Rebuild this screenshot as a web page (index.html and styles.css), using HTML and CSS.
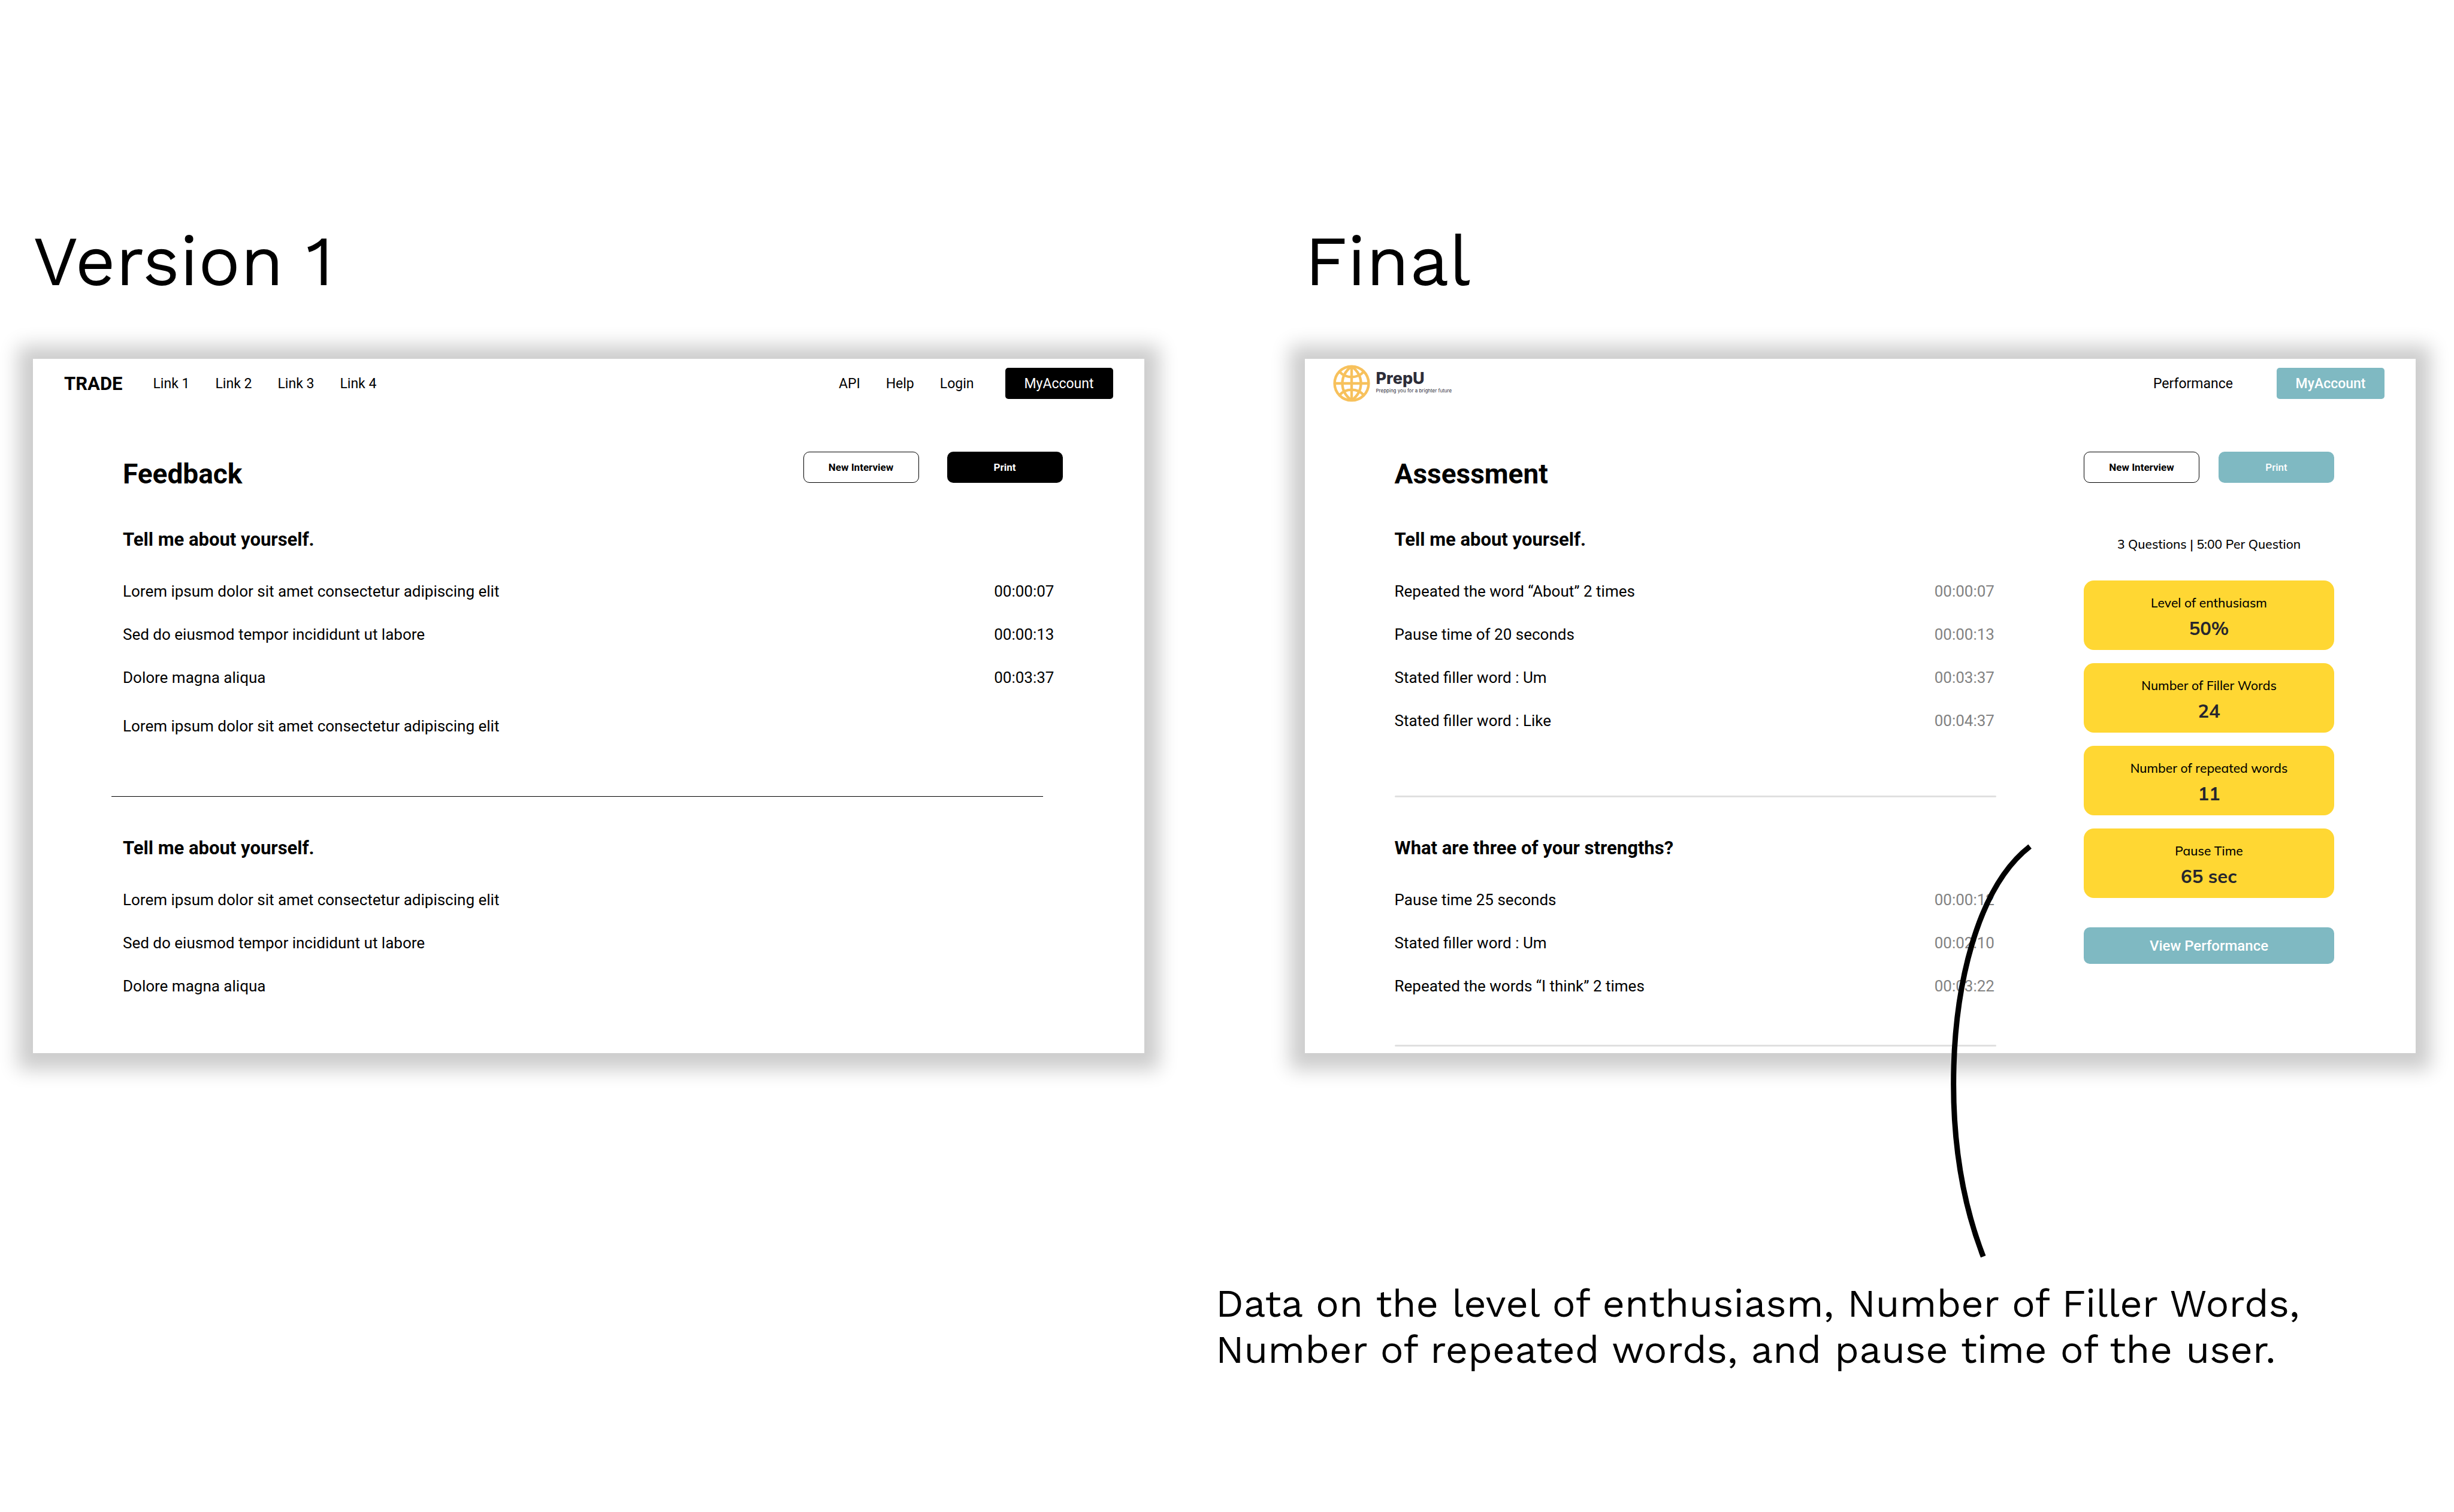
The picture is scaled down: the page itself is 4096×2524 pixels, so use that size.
FILE: index.html
```html
<!DOCTYPE html>
<html lang="en">
<head>
<meta charset="utf-8">
<title>PrepU: Version 1 and Final</title>
<link rel="stylesheet" href="styles.css">
</head>
<body>
<main class="page">
  <div class="versions">
    <section class="version">
      <h1 class="version-title">Version 1</h1>
      <div class="frame">
        <div class="screen">
          <header class="navbar">
            <a class="brand" href="#">TRADE</a>
            <nav class="links">
              <a href="#">Link 1</a>
              <a href="#">Link 2</a>
              <a href="#">Link 3</a>
              <a href="#">Link 4</a>
            </nav>
            <nav class="links links-end">
              <a href="#">API</a>
              <a href="#">Help</a>
              <a href="#">Login</a>
            </nav>
            <button class="account account-dark" type="button">MyAccount</button>
          </header>
          <div class="content">
            <div class="title-row">
              <h2 class="screen-title">Feedback</h2>
              <div class="actions actions-wide">
                <button class="action action-outline" type="button">New Interview</button>
                <button class="action action-dark" type="button">Print</button>
              </div>
            </div>
            <h3 class="question">Tell me about yourself.</h3>
            <table class="remarks remarks-inset">
              <tr><td>Lorem ipsum dolor sit amet consectetur adipiscing elit</td><td class="time">00:00:07</td></tr>
              <tr><td>Sed do eiusmod tempor incididunt ut labore</td><td class="time">00:00:13</td></tr>
              <tr><td>Dolore magna aliqua</td><td class="time">00:03:37</td></tr>
            </table>
            <p class="note">Lorem ipsum dolor sit amet consectetur adipiscing elit</p>
            <hr class="rule rule-dark">
            <h3 class="question question-next">Tell me about yourself.</h3>
            <table class="remarks remarks-inset">
              <tr><td>Lorem ipsum dolor sit amet consectetur adipiscing elit</td></tr>
              <tr><td>Sed do eiusmod tempor incididunt ut labore</td></tr>
              <tr><td>Dolore magna aliqua</td></tr>
            </table>
          </div>
        </div>
      </div>
    </section>

    <section class="version">
      <h1 class="version-title">Final</h1>
      <div class="frame">
        <div class="screen">
          <header class="navbar navbar-logo">
            <a class="logo" href="#">
              <svg class="globe" viewBox="0 0 96 96" fill="none" stroke="#f7c15c" stroke-width="6.8" aria-hidden="true">
                <circle cx="48" cy="48" r="44"/>
                <path d="M48 4v88M4 48h88"/>
                <path d="M48 4C16 28 16 68 48 92M48 4C80 28 80 68 48 92"/>
                <path d="M17 18C33 36 63 36 79 18M17 78C33 60 63 60 79 78"/>
              </svg>
              <span class="logo-text">
                <span class="logo-name">PrepU</span>
                <span class="logo-tagline">Prepping you for a brighter future</span>
              </span>
            </a>
            <nav class="links links-end links-performance">
              <a href="#">Performance</a>
            </nav>
            <button class="account account-teal" type="button">MyAccount</button>
          </header>
          <div class="content content-split">
            <div class="review">
              <h2 class="screen-title">Assessment</h2>
              <h3 class="question">Tell me about yourself.</h3>
              <table class="remarks">
                <tr><td>Repeated the word “About” 2 times</td><td class="time time-muted">00:00:07</td></tr>
                <tr><td>Pause time of 20 seconds</td><td class="time time-muted">00:00:13</td></tr>
                <tr><td>Stated filler word : Um</td><td class="time time-muted">00:03:37</td></tr>
                <tr><td>Stated filler word : Like</td><td class="time time-muted">00:04:37</td></tr>
              </table>
              <hr class="rule rule-light">
              <h3 class="question question-next">What are three of your strengths?</h3>
              <table class="remarks">
                <tr><td>Pause time 25 seconds</td><td class="time time-muted">00:00:12</td></tr>
                <tr><td>Stated filler word : Um</td><td class="time time-muted">00:02:10</td></tr>
                <tr><td>Repeated the words “I think” 2 times</td><td class="time time-muted">00:03:22</td></tr>
              </table>
              <hr class="rule rule-light rule-last">
            </div>
            <aside class="summary">
              <div class="actions">
                <button class="action action-outline" type="button">New Interview</button>
                <button class="action action-teal" type="button">Print</button>
              </div>
              <p class="session">3 Questions | 5:00 Per Question</p>
              <dl class="stats">
                <div class="stat"><dt>Level of enthusiasm</dt><dd>50%</dd></div>
                <div class="stat"><dt>Number of Filler Words</dt><dd>24</dd></div>
                <div class="stat"><dt>Number of repeated words</dt><dd>11</dd></div>
                <div class="stat"><dt>Pause Time</dt><dd>65 sec</dd></div>
              </dl>
              <button class="view" type="button">View Performance</button>
            </aside>
          </div>
        </div>
        <svg class="pointer" viewBox="5040 2180 240 1090" fill="none" stroke="#000" stroke-width="14" aria-hidden="true">
          <path d="M5262 2194C5125 2300 5064 2560 5064 2810C5064 2980 5092 3130 5141 3257"/>
        </svg>
      </div>
    </section>
  </div>
  <p class="caption">Data on the level of enthusiasm, Number of Filler Words,<br>Number of repeated words, and pause time of the user.</p>
</main>
</body>
</html>
```
FILE: styles.css
```css
* {
  box-sizing: border-box;
}

body {
  margin: 0;
  background: #fff;
  color: #000;
  font-family: Roboto, "Liberation Sans", sans-serif;
}

h1, h2, h3, p, dl, dd {
  margin: 0;
}

a {
  color: inherit;
  text-decoration: none;
}

button {
  padding: 0;
  border: 0;
  font-family: inherit;
  cursor: pointer;
}

.page {
  padding: 368px 64px 0 55px;
}

.versions {
  display: grid;
  grid-template-columns: 1fr 1fr;
  gap: 268px;
}

.version-title {
  margin-bottom: 95px;
  font: 400 117px/136px "Work Sans", Inter, sans-serif;
}

.frame {
  position: relative;
}

.screen {
  aspect-ratio: 16 / 10;
  background: #fff;
  box-shadow: 0 3px 30px 25px rgba(0, 0, 0, 0.2);
}

/* Navigation bar */

.navbar {
  display: flex;
  align-items: center;
  padding: 15px 52px 17px;
}

.navbar-logo {
  padding-left: 47px;
}

.brand {
  margin-right: 51px;
  font-size: 31px;
  font-weight: 700;
}

.links {
  display: flex;
  gap: 43px;
  font-size: 23px;
}

.links-end {
  margin-left: auto;
  margin-right: 52px;
}

.links-performance {
  margin-right: 73px;
}

.account {
  width: 180px;
  height: 52px;
  border-radius: 5px;
  color: #fff;
  font-size: 23px;
}

.account-dark {
  background: #000;
}

.account-teal {
  background: #7fb9c2;
  font-weight: 500;
}

.logo {
  display: flex;
  align-items: center;
  gap: 10px;
  height: 52px;
  color: #2d2d38;
  font-family: Inter, sans-serif;
}

.globe {
  width: 62px;
  height: 62px;
}

.logo-text {
  display: grid;
  padding-bottom: 4px;
}

.logo-name {
  font-size: 27px;
  font-weight: 800;
  line-height: 28px;
}

.logo-tagline {
  font-size: 8px;
  line-height: 12px;
}

/* Screen content */

.content {
  padding: 71px 136px 0 150px;
}

.content-split {
  display: grid;
  grid-template-columns: 1fr 418px;
  gap: 146px;
}

.title-row {
  display: flex;
  justify-content: space-between;
}

.screen-title {
  font-size: 46px;
  line-height: 74px;
}

.actions {
  display: flex;
  gap: 32px;
}

.actions-wide {
  gap: 47px;
}

.action {
  width: 193px;
  height: 52px;
  border-radius: 10px;
  font-size: 17px;
  font-weight: 700;
}

.action-outline {
  border: 1px solid #000;
  background: #fff;
  color: #000;
}

.action-dark {
  background: #000;
  color: #fff;
}

.action-teal {
  background: #7fb9c2;
  color: #fff;
  font-weight: 500;
}

.question {
  margin: 55px 0 32px;
  font-size: 31px;
  line-height: 36px;
}

.question-next {
  margin-top: 67px;
}

.remarks {
  width: 100%;
  border-collapse: collapse;
  font-size: 26px;
  line-height: 72px;
}

.remarks-inset {
  width: calc(100% - 14px);
}

.remarks td {
  padding: 0;
}

.remarks .time {
  text-align: right;
}

.remarks .time-muted {
  padding-right: 3px;
  color: #828282;
}

.note {
  margin-top: 9px;
  font-size: 26px;
  line-height: 72px;
}

.rule {
  height: 3px;
  margin: 89px 0 0;
  border: 0;
  border-radius: 2px;
}

.rule-light {
  background: #e0e0e0;
}

.rule-last {
  margin-top: 62px;
}

.rule-dark {
  height: 1px;
  margin: 81px 33px 68px -19px;
  border-radius: 0;
  background: #000;
}

/* Summary column */

.session {
  margin: 87px 0 46px;
  font: 500 21px/30px Mulish, "Open Sans", sans-serif;
  text-align: center;
}

.stats {
  display: grid;
  gap: 22px;
}

.stat {
  height: 116px;
  padding-top: 22px;
  border-radius: 17px;
  background: #ffd733;
  font-family: Mulish, "Open Sans", sans-serif;
  text-align: center;
}

.stat dt {
  font-size: 21px;
  font-weight: 500;
  line-height: 30px;
}

.stat dd {
  margin-top: 6px;
  color: #26262e;
  font-size: 31px;
  font-weight: 700;
  line-height: 44px;
}

.view {
  width: 100%;
  height: 61px;
  margin-top: 49px;
  border-radius: 10px;
  background: #7fb9c2;
  color: #fff;
  font-size: 24px;
  font-weight: 500;
}

/* Callout */

.pointer {
  position: absolute;
  top: 805px;
  left: 1067px;
  width: 155px;
  height: 702px;
}

.caption {
  margin-top: 380px;
  padding-left: 1974px;
  font: 400 65px/77px "Work Sans", Inter, sans-serif;
  white-space: nowrap;
}
```
